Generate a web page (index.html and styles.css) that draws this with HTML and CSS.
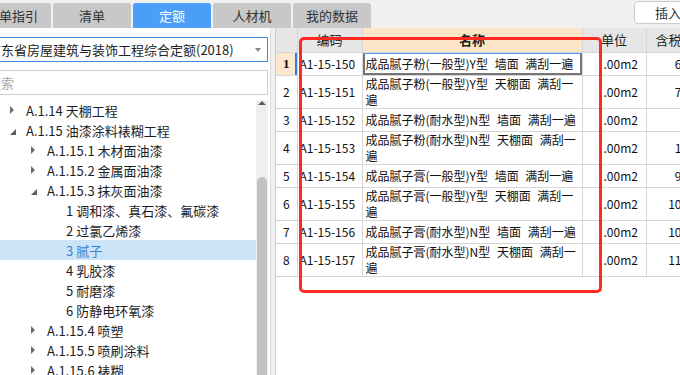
FILE: index.html
```html
<!DOCTYPE html>
<html lang="zh-CN">
<head>
    <meta charset="UTF-8">
    <meta name="viewport" content="width=device-width, initial-scale=1.0">
    <title>定额</title>
    <link rel="stylesheet" href="styles.css">
</head>
<body>
    <div class="topbar">
        <div class="tabs">
            <div class="tab">清单指引</div>
            <div class="tab">清单</div>
            <div class="tab active">定额</div>
            <div class="tab">人材机</div>
            <div class="tab">我的数据</div>
        </div>
        <button class="insert-btn">插入</button>
    </div>

    <div class="main">
        <div class="side">
            <div class="select">广东省房屋建筑与装饰工程综合定额(2018)<span class="caret"></span></div>
            <div class="search">搜索</div>
            <div class="tree-wrap">
                <ul class="tree">
                    <li class="lv1 closed">A.1.14 天棚工程</li>
                    <li class="lv1 open">A.1.15 油漆涂料裱糊工程</li>
                    <li class="lv2 closed">A.1.15.1 木材面油漆</li>
                    <li class="lv2 closed">A.1.15.2 金属面油漆</li>
                    <li class="lv2 open">A.1.15.3 抹灰面油漆</li>
                    <li class="lv3">1 调和漆、真石漆、氟碳漆</li>
                    <li class="lv3">2 过氯乙烯漆</li>
                    <li class="lv3 selected">3 腻子</li>
                    <li class="lv3">4 乳胶漆</li>
                    <li class="lv3">5 耐磨漆</li>
                    <li class="lv3">6 防静电环氧漆</li>
                    <li class="lv2 closed">A.1.15.4 喷塑</li>
                    <li class="lv2 closed">A.1.15.5 喷刷涂料</li>
                    <li class="lv2 closed">A.1.15.6 裱糊</li>
                </ul>
                <div class="scrollbar">
                    <span class="up"></span>
                    <span class="thumb"></span>
                </div>
            </div>
        </div>

        <div class="grid">
            <table>
                <colgroup>
                    <col class="c-no">
                    <col class="c-code">
                    <col class="c-name">
                    <col class="c-unit">
                    <col class="c-tax">
                </colgroup>
                <thead>
                    <tr>
                        <th></th>
                        <th>编码</th>
                        <th class="hl">名称</th>
                        <th>单位</th>
                        <th class="tax-h">含税</th>
                    </tr>
                </thead>
                <tbody>
                    <tr class="one">
                        <td class="no cur">1</td>
                        <td class="code">A1-15-150</td>
                        <td class="name focus">成品腻子粉(一般型)Y型 墙面 满刮一遍</td>
                        <td class="unit">.00m2</td>
                        <td class="tax">6</td>
                    </tr>
                    <tr class="two">
                        <td class="no">2</td>
                        <td class="code">A1-15-151</td>
                        <td class="name">成品腻子粉(一般型)Y型 天棚面 满刮一<br>遍</td>
                        <td class="unit">.00m2</td>
                        <td class="tax">7</td>
                    </tr>
                    <tr class="one">
                        <td class="no">3</td>
                        <td class="code">A1-15-152</td>
                        <td class="name">成品腻子粉(耐水型)N型 墙面 满刮一遍</td>
                        <td class="unit">.00m2</td>
                        <td class="tax"></td>
                    </tr>
                    <tr class="two">
                        <td class="no">4</td>
                        <td class="code">A1-15-153</td>
                        <td class="name">成品腻子粉(耐水型)N型 天棚面 满刮一<br>遍</td>
                        <td class="unit">.00m2</td>
                        <td class="tax">1</td>
                    </tr>
                    <tr class="one">
                        <td class="no">5</td>
                        <td class="code">A1-15-154</td>
                        <td class="name">成品腻子膏(一般型)Y型 墙面 满刮一遍</td>
                        <td class="unit">.00m2</td>
                        <td class="tax">9</td>
                    </tr>
                    <tr class="two">
                        <td class="no">6</td>
                        <td class="code">A1-15-155</td>
                        <td class="name">成品腻子膏(一般型)Y型 天棚面 满刮一<br>遍</td>
                        <td class="unit">.00m2</td>
                        <td class="tax">10</td>
                    </tr>
                    <tr class="one">
                        <td class="no">7</td>
                        <td class="code">A1-15-156</td>
                        <td class="name">成品腻子膏(耐水型)N型 墙面 满刮一遍</td>
                        <td class="unit">.00m2</td>
                        <td class="tax">10</td>
                    </tr>
                    <tr class="two">
                        <td class="no">8</td>
                        <td class="code">A1-15-157</td>
                        <td class="name">成品腻子膏(耐水型)N型 天棚面 满刮一<br>遍</td>
                        <td class="unit">.00m2</td>
                        <td class="tax">11</td>
                    </tr>
                </tbody>
            </table>
            <div class="mark"></div>
        </div>
    </div>
</body>
</html>
```

FILE: styles.css
```css
/* Page */
* {
    box-sizing: border-box;
}

body {
    margin: 0;
    width: 680px;
    height: 375px;
    overflow: hidden;
    font-family: "Noto Sans CJK SC", "Liberation Sans", sans-serif;
    font-size: 13px;
    color: #222;
    background: #f0f0f0;
}

/* Tab bar */
.topbar {
    height: 28px;
    display: flex;
    align-items: flex-end;
    background: #f0f0f0;
}

.tabs {
    display: flex;
    gap: 2px;
    margin-left: -27px;
}

.tab {
    width: 78px;
    height: 25px;
    line-height: 25px;
    text-align: center;
    background: #c8c8c8;
    color: #333;
    border-radius: 3px 3px 0 0;
}

.tab.active {
    background: #4a9ef5;
    color: #fff;
}

.insert-btn {
    align-self: flex-start;
    margin-left: auto;
    margin-right: -20px;
    margin-top: 1px;
    width: 66px;
    height: 23px;
    padding: 0 0 0 20px;
    text-align: left;
    font-family: inherit;
    font-size: 13px;
    color: #333;
    background: #fff;
    border: 1px solid #cccccc;
    border-radius: 4px;
}

/* Main area */
.main {
    display: flex;
    height: 347px;
}

.side {
    width: 292px;
    margin-left: -21px;
    padding-right: 2px;
    display: flex;
    flex-direction: column;
    background: #fff;
    border-right: 1px solid #dcdcdc;
}

.select {
    position: relative;
    margin-top: 9px;
    height: 25px;
    line-height: 23px;
    padding-left: 8px;
    border: 1px solid #3a8ee6;
    white-space: nowrap;
}

.caret {
    position: absolute;
    right: 6px;
    top: 10px;
    border-left: 3px solid transparent;
    border-right: 3px solid transparent;
    border-top: 4px solid #888;
}

.search {
    margin-top: 8px;
    height: 25px;
    line-height: 23px;
    padding-left: 8px;
    border: 1px solid #cfcfcf;
    color: #a8a8a8;
}

/* Tree */
.tree-wrap {
    flex: 1;
    display: flex;
    margin-top: 5px;
    min-height: 0;
}

.tree {
    flex: 1;
    list-style: none;
    margin: 0;
    padding: 0;
}

.tree li {
    height: 20px;
    display: flex;
    align-items: center;
    white-space: nowrap;
    color: #1e1e1e;
}

.tree .lv1 {
    padding-left: 31px;
}

.tree .lv2 {
    padding-left: 52px;
}

.tree .lv3 {
    padding-left: 87px;
}

.tree .closed::before {
    content: "";
    border-left: 4px solid #6e6e6e;
    border-top: 4px solid transparent;
    border-bottom: 4px solid transparent;
    margin-right: 12px;
}

.tree .open::before {
    content: "";
    border-left: 6px solid transparent;
    border-bottom: 6px solid #5c5c5c;
    margin-top: 3px;
    margin-right: 10px;
}

.tree .selected {
    background: #cce4f7;
    color: #3a7fd5;
}

.scrollbar {
    width: 12px;
    display: flex;
    flex-direction: column;
    align-items: center;
    background: #efefef;
}

.up {
    margin-top: 1px;
    border-left: 4px solid transparent;
    border-right: 4px solid transparent;
    border-bottom: 4px solid #5a5a5a;
}

.thumb {
    margin-top: 72px;
    width: 10px;
    flex: 1;
    background: #c2c2c2;
    border-radius: 5px 5px 0 0;
}

/* Grid */
.grid {
    position: relative;
    flex: 1;
    margin-left: 4px;
    background: #fff;
    border-left: 1px solid #cdcdcd;
    overflow: hidden;
}

table {
    width: 408px;
    table-layout: fixed;
    border-collapse: collapse;
    font-size: 12px;
    color: #111;
}

.c-no { width: 21px; }
.c-code { width: 65px; }
.c-name { width: 220px; }
.c-unit { width: 64px; }
.c-tax { width: 38px; }

th, td {
    border: 1px solid #d6d6d6;
    padding: 0;
    line-height: 16px;
    white-space: nowrap;
    overflow: hidden;
}

th {
    height: 24px;
    border-top: none;
    background: #e6e6e6;
    font-weight: normal;
    font-size: 13px;
    color: #222;
}

th:first-child,
td:first-child {
    border-left: none;
}

th.hl {
    background: #fde6c8;
    font-weight: bold;
}

th.tax-h {
    text-align: left;
    padding-left: 9px;
}

tr.one td {
    height: 23px;
}

tr.two td {
    height: 33px;
}

td.no {
    text-align: center;
}

td.no.cur {
    background: #fde7cd;
    font-weight: bold;
    font-family: "Liberation Serif", serif;
    font-size: 13px;
    box-shadow: inset -2px 0 0 #2f80e8;
}

td.code {
    padding-left: 2px;
}

td.name {
    padding-left: 3px;
    word-spacing: 4px;
}

td.name.focus {
    box-shadow: inset 0 1px 0 #4b9be9, inset 2px 0 0 #767676, inset -2px 0 0 #767676, inset 0 -2px 0 #767676;
}

td.unit {
    padding-left: 21px;
}

td.tax {
    text-align: right;
    padding-right: 2px;
}

/* Red annotation frame */
.mark {
    position: absolute;
    left: 23px;
    top: 9px;
    width: 303px;
    height: 256px;
    border: 3px solid #ff2a1f;
    border-radius: 5px;
}
```
